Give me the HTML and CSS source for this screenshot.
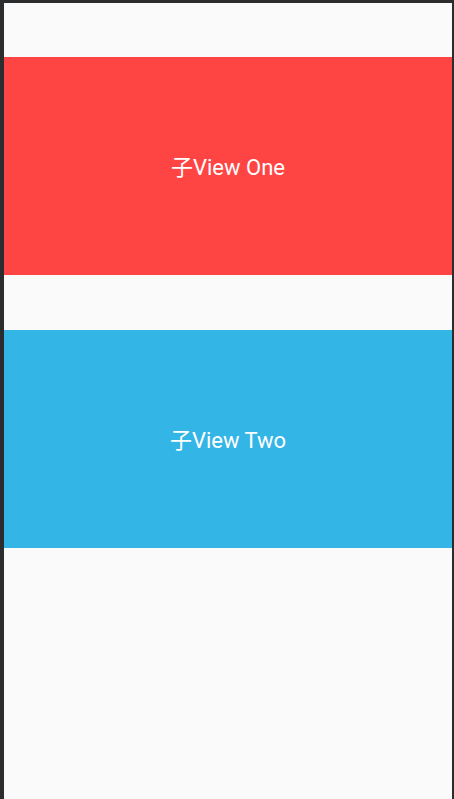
FILE: index.html
```html
<!DOCTYPE html>
<html>
<head>
<meta charset="utf-8">
<link rel="stylesheet" href="styles.css">
</head>
<body>
<div class="screen">
  <div class="panel panel-red">子View One</div>
  <div class="panel panel-blue">子View Two</div>
</div>
</body>
</html>
```
FILE: styles.css
```css
html, body {
  margin: 0;
  padding: 0;
}
body {
  background: #2b2c2e;
  padding: 3px 2px 0 4px;
  height: 799px;
  box-sizing: border-box;
  overflow: hidden;
}
.screen {
  background: #fafafa;
  height: 796px;
  display: flex;
  flex-direction: column;
  gap: 55px;
  padding-top: 54px;
  box-sizing: border-box;
}
.panel {
  height: 218px;
  display: flex;
  align-items: center;
  justify-content: center;
  color: #ffffff;
  font-family: Roboto, "Noto Sans CJK SC", sans-serif;
  font-size: 22px;
  padding-bottom: 3px;
  box-sizing: border-box;
}
.panel-red {
  background: #ff4444;
}
.panel-blue {
  background: #33b5e5;
}
```
